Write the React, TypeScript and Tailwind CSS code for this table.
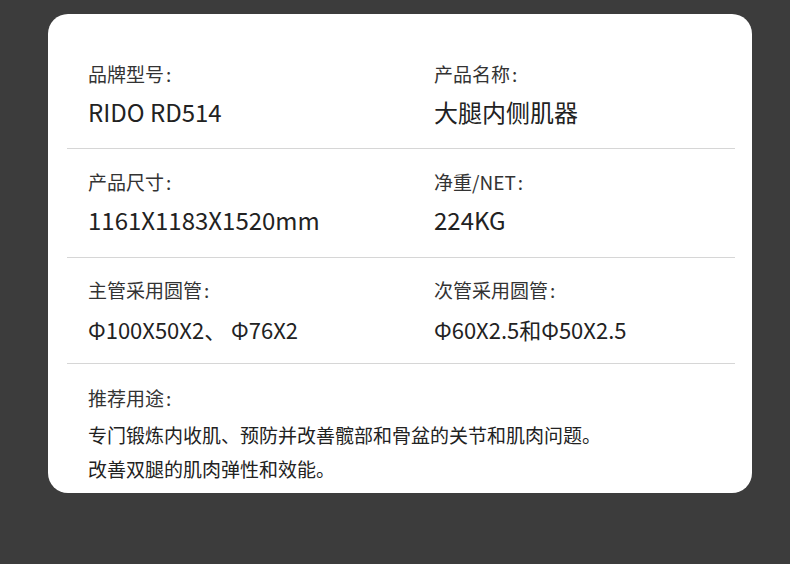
const specs = [
  {
    left: { label: '品牌型号', value: 'RIDO RD514' },
    right: { label: '产品名称', value: '大腿内侧肌器' },
    rowClass: 'h-[135px] pt-[47px]',
    valueClass: 'text-[24px] leading-[32px] mt-[9px]',
  },
  {
    left: { label: '产品尺寸', value: '1161X1183X1520mm' },
    right: { label: '净重/NET', value: '224KG' },
    rowClass: 'h-[109px] pt-[20px]',
    valueClass: 'text-[24px] leading-[32px] mt-[9px]',
  },
  {
    left: { label: '主管采用圆管', value: 'Φ100X50X2、 Φ76X2' },
    right: { label: '次管采用圆管', value: 'Φ60X2.5和Φ50X2.5' },
    rowClass: 'h-[106px] pt-[19px]',
    valueClass: 'text-[22px] leading-[30px] mt-[11px]',
  },
];

function Label({ text }: { text: string }) {
  return (
    <div className="text-[19px] leading-[26px] text-[#333333]">
      {text}
      <span className="ml-[2px]">:</span>
    </div>
  );
}

function Cell({ label, value, valueClass }: { label: string; value: string; valueClass: string }) {
  return (
    <div className="flex flex-col">
      <Label text={label} />
      <div className={`text-[#222222] whitespace-pre ${valueClass}`}>{value}</div>
    </div>
  );
}

export default function App() {
  return (
    <div
      className="w-full h-[564px] bg-[#3c3c3c] pt-[14px] px-[48px]"
      style={{ fontFamily: '"Noto Sans CJK SC", "Noto Sans", sans-serif' }}
    >
      <div className="w-[704px] h-[479px] bg-white rounded-[20px] pl-[19px] pr-[17px] overflow-hidden">
        {specs.map((row, i) => (
          <div
            key={i}
            className={`grid grid-cols-[346px_1fr] items-start pl-[21px] border-b border-[#d6d6d6] ${row.rowClass}`}
          >
            <Cell label={row.left.label} value={row.left.value} valueClass={row.valueClass} />
            <Cell label={row.right.label} value={row.right.value} valueClass={row.valueClass} />
          </div>
        ))}
        <div className="pl-[21px] pt-[21px]">
          <Label text="推荐用途" />
          <div className="mt-[7px] text-[19px] leading-[34px] text-[#222222]">
            <p>专门锻炼内收肌、预防并改善髋部和骨盆的关节和肌肉问题。</p>
            <p>改善双腿的肌肉弹性和效能。</p>
          </div>
        </div>
      </div>
    </div>
  );
}
